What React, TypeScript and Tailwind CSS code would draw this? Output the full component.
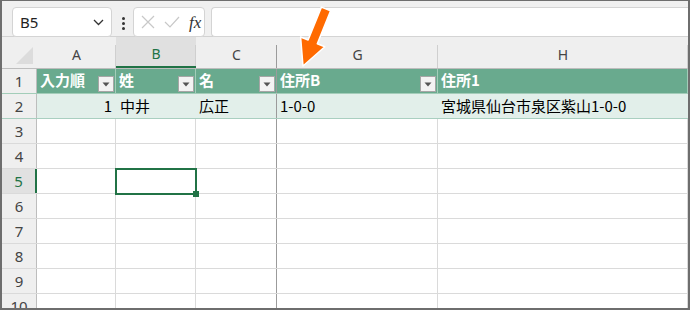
const cols = [
  { key: "A", w: "w-[79px]" },
  { key: "B", w: "w-[80px]" },
  { key: "C", w: "w-[81px]" },
  { key: "G", w: "w-[161px]" },
  { key: "H", w: "flex-1" },
];

const jp = { fontFamily: '"Noto Sans CJK JP", "Noto Sans", sans-serif' };
const ui = { fontFamily: '"Noto Sans", "Open Sans", sans-serif' };

function FilterButton() {
  return (
    <div className="absolute right-[1px] bottom-[1px] w-[16px] h-[16px] bg-[#f3f3f3] border border-[#a6a6a6] flex items-center justify-center">
      <svg width="8" height="5" viewBox="0 0 8 5">
        <path d="M0.5 0.5 L7.5 0.5 L4 4.5 Z" fill="#555" />
      </svg>
    </div>
  );
}

function HeaderCell({ label, w, filter, freeze }: { label: string; w: string; filter?: boolean; freeze?: boolean }) {
  return (
    <div
      className={`relative h-full ${w} shrink-0 border-r ${freeze ? "border-[#9b9b9b]" : "border-[#a3cdb9]"} bg-[#69aa8e] text-white font-bold text-[15px] pl-[3px] leading-[21px]`}
      style={jp}
    >
      {label}
      {filter && <FilterButton />}
    </div>
  );
}

function RowHeader({ n, active }: { n: number; active?: boolean }) {
  return (
    <div
      className={`w-[35px] shrink-0 h-full flex items-center justify-center text-[15px] border-r ${
        active ? "bg-[#e1e1e1] text-[#217346] border-r-2 border-[#217346]" : "bg-[#efefef] text-[#444] border-[#bdbdbd]"
      }`}
      style={ui}
    >
      {n}
    </div>
  );
}

function EmptyRow({ n }: { n: number }) {
  return (
    <div className="flex h-[25px] border-b border-[#dadada] shrink-0">
      <RowHeader n={n} active={n === 5} />
      {cols.map((c) => (
        <div
          key={c.key}
          className={`relative h-full ${c.w} shrink-0 border-r ${c.key === "C" ? "border-[#9b9b9b]" : "border-[#dadada]"}`}
        >
          {n === 5 && c.key === "B" && (
            <>
              <div className="absolute -left-[1px] -top-[1px] w-[82px] h-[27px] border-2 border-[#217346] z-10" />
              <div className="absolute -right-[4px] -bottom-[4px] w-[6px] h-[6px] bg-[#217346] z-20" />
            </>
          )}
        </div>
      ))}
    </div>
  );
}

export default function App() {
  return (
    <div className="relative w-[690px] h-[310px] overflow-hidden bg-white border-2 border-t border-[#6e6e6e] flex flex-col">
      {/* formula bar */}
      <div className="h-[36px] shrink-0 bg-[#f0f0f0] flex items-start pt-[6px] pl-[10px] border-b border-[#d2d2d2]">
        <div className="w-[100px] h-[30px] bg-white rounded-[4px] border border-[#d4d4d4] flex items-center justify-between px-[7px]">
          <span className="text-[15px] text-[#222]" style={ui}>B5</span>
          <svg width="11" height="7" viewBox="0 0 11 7">
            <path d="M1 1 L5.5 5.5 L10 1" fill="none" stroke="#333" strokeWidth="1.3" />
          </svg>
        </div>
        <div className="flex flex-col gap-[2px] pt-[10px] w-[4px] items-center ml-[9px]">
          <div className="w-[3px] h-[3px] bg-[#333] rounded-full" />
          <div className="w-[3px] h-[3px] bg-[#333] rounded-full" />
          <div className="w-[3px] h-[3px] bg-[#333] rounded-full" />
        </div>
        <div className="ml-[8px] w-[72px] h-[30px] bg-white rounded-[4px] border border-[#d4d4d4] flex items-center gap-[9px] pl-[7px]">
          <svg width="14" height="14" viewBox="0 0 14 14">
            <path d="M1 1 L13 13 M13 1 L1 13" stroke="#c8c8c8" strokeWidth="1.2" />
          </svg>
          <svg width="16" height="12" viewBox="0 0 16 12">
            <path d="M1 6 L6 11 L15 1" fill="none" stroke="#c8c8c8" strokeWidth="1.2" />
          </svg>
          <span className="text-[17px] italic text-[#333] leading-none" style={{ fontFamily: '"Liberation Serif", serif' }}>
            fx
          </span>
        </div>
        <div className="ml-[6px] flex-1 h-[30px] bg-white rounded-l-[4px] border border-r-0 border-[#d4d4d4]" />
      </div>

      {/* column header */}
      <div className="h-[32px] shrink-0 flex bg-[#efefef] border-b border-[#bdbdbd]">
        <div className="w-[35px] shrink-0 h-full relative">
          <svg className="absolute left-[14px] top-[10px]" width="18" height="18" viewBox="0 0 18 18">
            <path d="M17 0 L17 17 L0 17 Z" fill="#dcdcdc" />
          </svg>
        </div>
        {cols.map((c) => (
          <div
            key={c.key}
            className={`relative h-full ${c.w} shrink-0 flex items-center justify-center pt-[3px] text-[14px] ${
              c.key === "B" ? "bg-[#e0e0e0] text-[#217346] border-b-2 border-[#217346]" : "text-[#444]"
            }`}
            style={ui}
          >
            {c.key}
            <div
              className={`absolute right-0 top-[8px] bottom-0 w-px ${c.key === "C" ? "bg-[#9b9b9b]" : "bg-[#cfcfcf]"}`}
            />
          </div>
        ))}
      </div>

      {/* row 1 : table header */}
      <div className="flex h-[25px] shrink-0 border-b border-[#a3cdb9]">
        <RowHeader n={1} />
        <HeaderCell label="入力順" w="w-[79px]" filter />
        <HeaderCell label="姓" w="w-[80px]" filter />
        <HeaderCell label="名" w="w-[81px]" filter freeze />
        <HeaderCell label="住所B" w="w-[161px]" filter />
        <HeaderCell label="住所1" w="flex-1" />
      </div>

      {/* row 2 : data */}
      <div className="flex h-[25px] shrink-0 border-b border-[#a9cfc0] text-[15px] text-black" style={jp}>
        <RowHeader n={2} />
        <div className="w-[79px] shrink-0 h-full bg-[#e2efea] border-r border-[#e2efea] text-right pr-[3px] leading-[24px]">1</div>
        <div className="w-[80px] shrink-0 h-full bg-[#e2efea] border-r border-[#e2efea] pl-[4px] leading-[24px]">中井</div>
        <div className="w-[81px] shrink-0 h-full bg-[#e2efea] border-r border-[#9b9b9b] pl-[3px] leading-[24px]">広正</div>
        <div className="w-[161px] shrink-0 h-full bg-[#e2efea] border-r border-[#e2efea] pl-[3px] leading-[24px]">1-0-0</div>
        <div className="flex-1 h-full bg-[#e2efea] pl-[3px] leading-[24px]">宮城県仙台市泉区紫山1-0-0</div>
      </div>

      {[3, 4, 5, 6, 7, 8, 9, 10].map((n) => (
        <EmptyRow key={n} n={n} />
      ))}

      {/* orange arrow */}
      <svg className="absolute left-[294px] top-[4px] z-30" width="40" height="66" viewBox="0 0 40 66">
        <polygon
          points="34.6,5.9 21.3,38.8 28.8,41.8 7,61 4.6,32 12.1,35 25.4,2.1"
          fill="#ff6a00"
          stroke="white"
          strokeWidth="1.5"
          strokeLinejoin="round"
        />
      </svg>
    </div>
  );
}
